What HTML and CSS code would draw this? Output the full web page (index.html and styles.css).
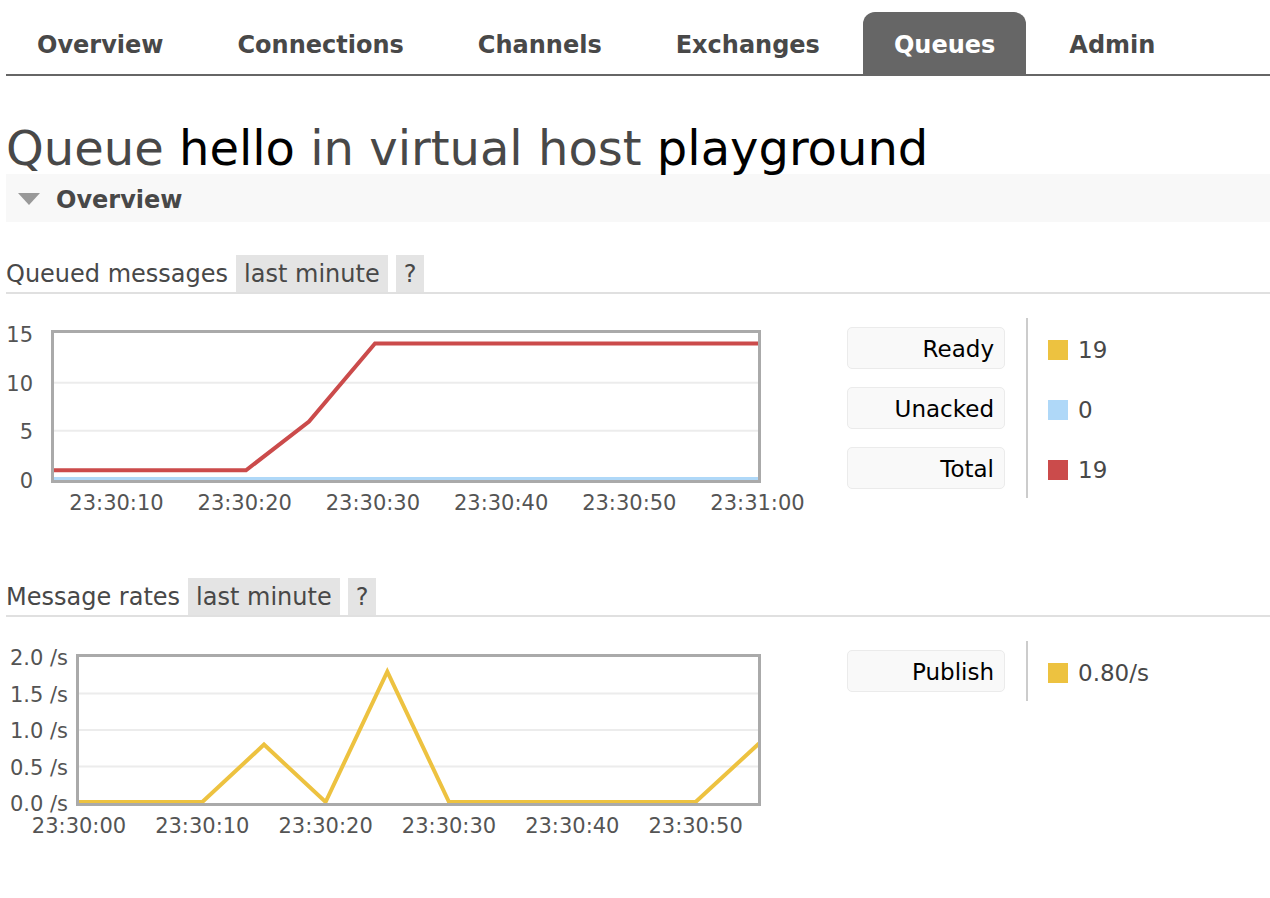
FILE: index.html
```html
<!DOCTYPE html>
<html lang="en">
<head>
<meta charset="utf-8">
<title>Queue hello</title>
<link rel="stylesheet" href="styles.css">
</head>
<body>
<nav class="tabs">
  <a class="tab">Overview</a>
  <a class="tab">Connections</a>
  <a class="tab">Channels</a>
  <a class="tab">Exchanges</a>
  <a class="tab active">Queues</a>
  <a class="tab">Admin</a>
</nav>

<h1 class="title">Queue <span class="name">hello</span> in virtual host <span class="name">playground</span></h1>

<div class="section-head"><span class="tri"></span>Overview</div>

<section class="chart-block">
  <h2 class="chart-head"><span class="chart-title">Queued messages</span><span class="pill">last minute</span><span class="pill">?</span></h2>
  <div class="chart-row">
    <svg class="chart" width="841" height="200" viewBox="0 0 841 200">
      <g class="grid">
        <line x1="48" x2="753" y1="64.7" y2="64.7"/>
        <line x1="48" x2="753" y1="112.7" y2="112.7"/>
      </g>
      <polyline class="s-unacked" points="48,161 753,161"/>
      <polyline class="s-total" points="48,152.3 240,152.3 303,103.5 369,25.5 753,25.5"/>
      <rect class="frame" x="46.5" y="13.5" width="707" height="150"/>
      <g class="ylab">
        <text x="27" y="24">15</text>
        <text x="27" y="72.5">10</text>
        <text x="27" y="120.5">5</text>
        <text x="27" y="170">0</text>
      </g>
      <g class="xlab">
        <text x="110.5" y="192">23:30:10</text>
        <text x="238.7" y="192">23:30:20</text>
        <text x="366.9" y="192">23:30:30</text>
        <text x="495.1" y="192">23:30:40</text>
        <text x="623.3" y="192">23:30:50</text>
        <text x="751.5" y="192">23:31:00</text>
      </g>
    </svg>
    <div class="legend">
      <div class="legend-labels">
        <div class="legend-label">Ready</div>
        <div class="legend-label">Unacked</div>
        <div class="legend-label">Total</div>
      </div>
      <div class="legend-values">
        <div class="legend-value"><span class="swatch c-yellow"></span>19</div>
        <div class="legend-value"><span class="swatch c-blue"></span>0</div>
        <div class="legend-value"><span class="swatch c-red"></span>19</div>
      </div>
    </div>
  </div>
</section>

<section class="chart-block rates">
  <h2 class="chart-head"><span class="chart-title">Message rates</span><span class="pill">last minute</span><span class="pill">?</span></h2>
  <div class="chart-row">
    <svg class="chart" width="841" height="200" viewBox="0 0 841 200">
      <g class="grid">
        <line x1="73" x2="753" y1="52.5" y2="52.5"/>
        <line x1="73" x2="753" y1="89" y2="89"/>
        <line x1="73" x2="753" y1="125.5" y2="125.5"/>
      </g>
      <polyline class="s-publish" points="73,161 196.3,161 258,103.6 319.6,161 381.3,30.6 443,161 689.6,161 753,102.5"/>
      <rect class="frame" x="71.5" y="14.5" width="682" height="149"/>
      <g class="ylab">
        <text x="62" y="24">2.0 /s</text>
        <text x="62" y="60.5">1.5 /s</text>
        <text x="62" y="97">1.0 /s</text>
        <text x="62" y="133.5">0.5 /s</text>
        <text x="62" y="170">0.0 /s</text>
      </g>
      <g class="xlab">
        <text x="73" y="192">23:30:00</text>
        <text x="196.3" y="192">23:30:10</text>
        <text x="319.6" y="192">23:30:20</text>
        <text x="443" y="192">23:30:30</text>
        <text x="566.3" y="192">23:30:40</text>
        <text x="689.6" y="192">23:30:50</text>
      </g>
    </svg>
    <div class="legend">
      <div class="legend-labels">
        <div class="legend-label">Publish</div>
      </div>
      <div class="legend-values">
        <div class="legend-value"><span class="swatch c-yellow"></span>0.80/s</div>
      </div>
    </div>
  </div>
</section>
</body>
</html>
```

FILE: styles.css
```css
html, body {
  background: #fff;
}

body {
  margin: 0;
  padding: 0 0 0 6px;
  font-family: "DejaVu Sans", Verdana, sans-serif;
  color: #484848;
}

/* Top navigation tabs */
.tabs {
  display: flex;
  gap: 12px;
  padding-top: 12px;
  border-bottom: 2px solid #666;
}

.tab {
  font-size: 24px;
  font-weight: bold;
  line-height: 58px;
  padding: 4px 31px 0;
  color: #484848;
  border-radius: 12px 12px 0 0;
}

.tab.active {
  background: #666;
  color: #fff;
}

/* Page title */
.title {
  margin: 46px 0 0;
  font-size: 48px;
  font-weight: normal;
  line-height: 52px;
  color: #484848;
}

.title .name {
  color: #000;
}

/* Collapsible section header */
.section-head {
  display: flex;
  align-items: center;
  height: 48px;
  box-sizing: border-box;
  padding: 4px 0 0 12px;
  background: #f8f8f8;
  font-size: 24px;
  font-weight: bold;
  line-height: 44px;
  color: #484848;
}

.tri {
  width: 0;
  height: 0;
  border-left: 11px solid transparent;
  border-right: 11px solid transparent;
  border-top: 12px solid #999;
  margin: -3px 16px 0 0;
}

/* Chart blocks */
.chart-block {
  margin-top: 33px;
}

.chart-block.rates {
  margin-top: 60px;
}

.chart-head {
  display: flex;
  margin: 0;
  font-size: 24px;
  font-weight: normal;
  border-bottom: 2px solid #e0e0e0;
}

.chart-title,
.pill {
  padding-top: 2px;
  line-height: 35px;
}

.pill {
  margin-left: 8px;
  padding-left: 8px;
  padding-right: 8px;
  background: #e4e4e4;
}

.chart-row {
  display: flex;
  align-items: flex-start;
  margin-top: 24px;
}

.chart {
  display: block;
  flex: none;
}

.chart text {
  font-family: "DejaVu Sans", Verdana, sans-serif;
  font-size: 21px;
  fill: #545454;
}

.chart .ylab text {
  text-anchor: end;
}

.chart .xlab text {
  text-anchor: middle;
}

.grid line {
  stroke: #ececec;
  stroke-width: 2;
}

.frame {
  fill: none;
  stroke: #aaa;
  stroke-width: 3;
}

.s-total,
.s-unacked,
.s-publish {
  fill: none;
  stroke-width: 4;
}

.s-total { stroke: #cb4b4b; }
.s-unacked { stroke: #afd8f8; }
.s-publish { stroke: #edc240; }

/* Legend */
.legend {
  display: flex;
  align-items: stretch;
}

.legend-labels {
  display: flex;
  flex-direction: column;
  gap: 18px;
  width: 158px;
  padding: 9px 0;
}

.legend-label {
  height: 42px;
  box-sizing: border-box;
  padding: 2px 10px 0 0;
  background: #f9f9f9;
  border: 1px solid #ebebeb;
  border-radius: 5px;
  text-align: right;
  font-size: 23px;
  line-height: 38px;
  color: #000;
}

.legend-values {
  display: flex;
  flex-direction: column;
  gap: 18px;
  margin-left: 21px;
  padding: 9px 0 9px 20px;
  border-left: 2px solid #ccc;
}

.legend-value {
  display: flex;
  align-items: center;
  height: 42px;
  box-sizing: border-box;
  padding-top: 4px;
  font-size: 23px;
  color: #484848;
}

.swatch {
  width: 20px;
  height: 20px;
  margin-right: 10px;
}

.c-yellow { background: #edc240; }
.c-blue { background: #afd8f8; }
.c-red { background: #cb4b4b; }
```
